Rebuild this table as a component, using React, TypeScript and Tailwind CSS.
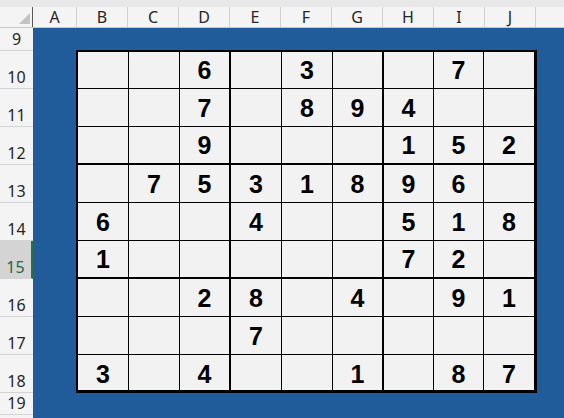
const puzzle = [
  "..6.3..7.",
  "..7.894..",
  "..9...152",
  ".7531896.",
  "6..4..518",
  "1.....72.",
  "..28.4.91",
  "...7.....",
  "3.4..1.87",
];

const columns = [
  { name: "A", w: "w-[44px]" },
  { name: "B", w: "w-[51px]" },
  { name: "C", w: "w-[51px]" },
  { name: "D", w: "w-[51px]" },
  { name: "E", w: "w-[51px]" },
  { name: "F", w: "w-[51px]" },
  { name: "G", w: "w-[51px]" },
  { name: "H", w: "w-[51px]" },
  { name: "I", w: "w-[51px]" },
  { name: "J", w: "w-[51px]" },
];

const rows = [
  { label: "9", h: "h-[23px]" },
  { label: "10", h: "h-[38px]" },
  { label: "11", h: "h-[38px]" },
  { label: "12", h: "h-[38px]" },
  { label: "13", h: "h-[38px]" },
  { label: "14", h: "h-[38px]" },
  { label: "15", h: "h-[38px]", selected: true },
  { label: "16", h: "h-[38px]" },
  { label: "17", h: "h-[38px]" },
  { label: "18", h: "h-[38px]" },
  { label: "19", h: "h-[22px]" },
];

const Sudoku = () => {
  return (
    <div className="inline-grid grid-cols-[repeat(6,51px)_repeat(3,50px)] grid-rows-[37px_repeat(7,38px)_35px] border-l-2 border-t-2 border-r-[3px] border-b-[3px] border-black">
      {puzzle.map((line, r) =>
        line.split("").map((ch, c) => {
          const right = c === 8 ? "" : c === 2 || c === 5 ? "border-r-2" : "border-r";
          const bottom = r === 8 ? "" : r === 2 || r === 5 ? "border-b-2" : "border-b";
          const pad = r === 8 ? "pb-[3px]" : "pb-[5px]";
          return (
            <div
              key={`${r}-${c}`}
              className={`${right} ${bottom} ${pad} border-black bg-[#f2f2f2] flex items-end justify-center font-['Liberation_Sans',Arial,sans-serif] font-bold text-[25px] leading-none text-black`}
            >
              {ch === "." ? "" : ch}
            </div>
          );
        })
      )}
    </div>
  );
};

export default function App() {
  return (
    <div className="w-[564px] h-[418px] overflow-hidden flex flex-col bg-[#205c99] font-['Noto_Sans',sans-serif] text-[#262626]">
      <div className="h-[7px] shrink-0 bg-[#e8e8e8]" />
      <div className="flex h-[21px] shrink-0 bg-[#f4f4f4] border-b border-[#c8c8c8]">
        <div className="w-[33px] shrink-0 relative border-r border-[#5a5a5a]">
          <svg className="absolute right-[2px] bottom-[3px]" width="11" height="11" viewBox="0 0 11 11">
            <polygon points="11,0 11,11 0,11" fill="#c3c3c3" />
          </svg>
        </div>
        {columns.map((col) => (
          <div
            key={col.name}
            className={`${col.w} shrink-0 border-r border-[#d0d0d0] flex items-center justify-center text-[16px] leading-none`}
          >
            {col.name}
          </div>
        ))}
        <div className="flex-1" />
      </div>
      <div className="flex flex-1 min-h-0">
        <div className="w-[33px] shrink-0 flex flex-col bg-[#f4f4f4]">
          {rows.map((row) => (
            <div
              key={row.label}
              className={`${row.h} shrink-0 border-b border-[#d4d4d4] flex items-end justify-center pb-[3px] text-[16px] leading-none ${
                row.selected ? "bg-[#d4d4d4] text-[#1e6b3f] border-r-2 border-r-[#217346]" : ""
              }`}
            >
              {row.label}
            </div>
          ))}
          <div className="flex-1" />
        </div>
        <div className="flex-1 pl-[43px] pt-[22px]">
          <Sudoku />
        </div>
      </div>
    </div>
  );
}
